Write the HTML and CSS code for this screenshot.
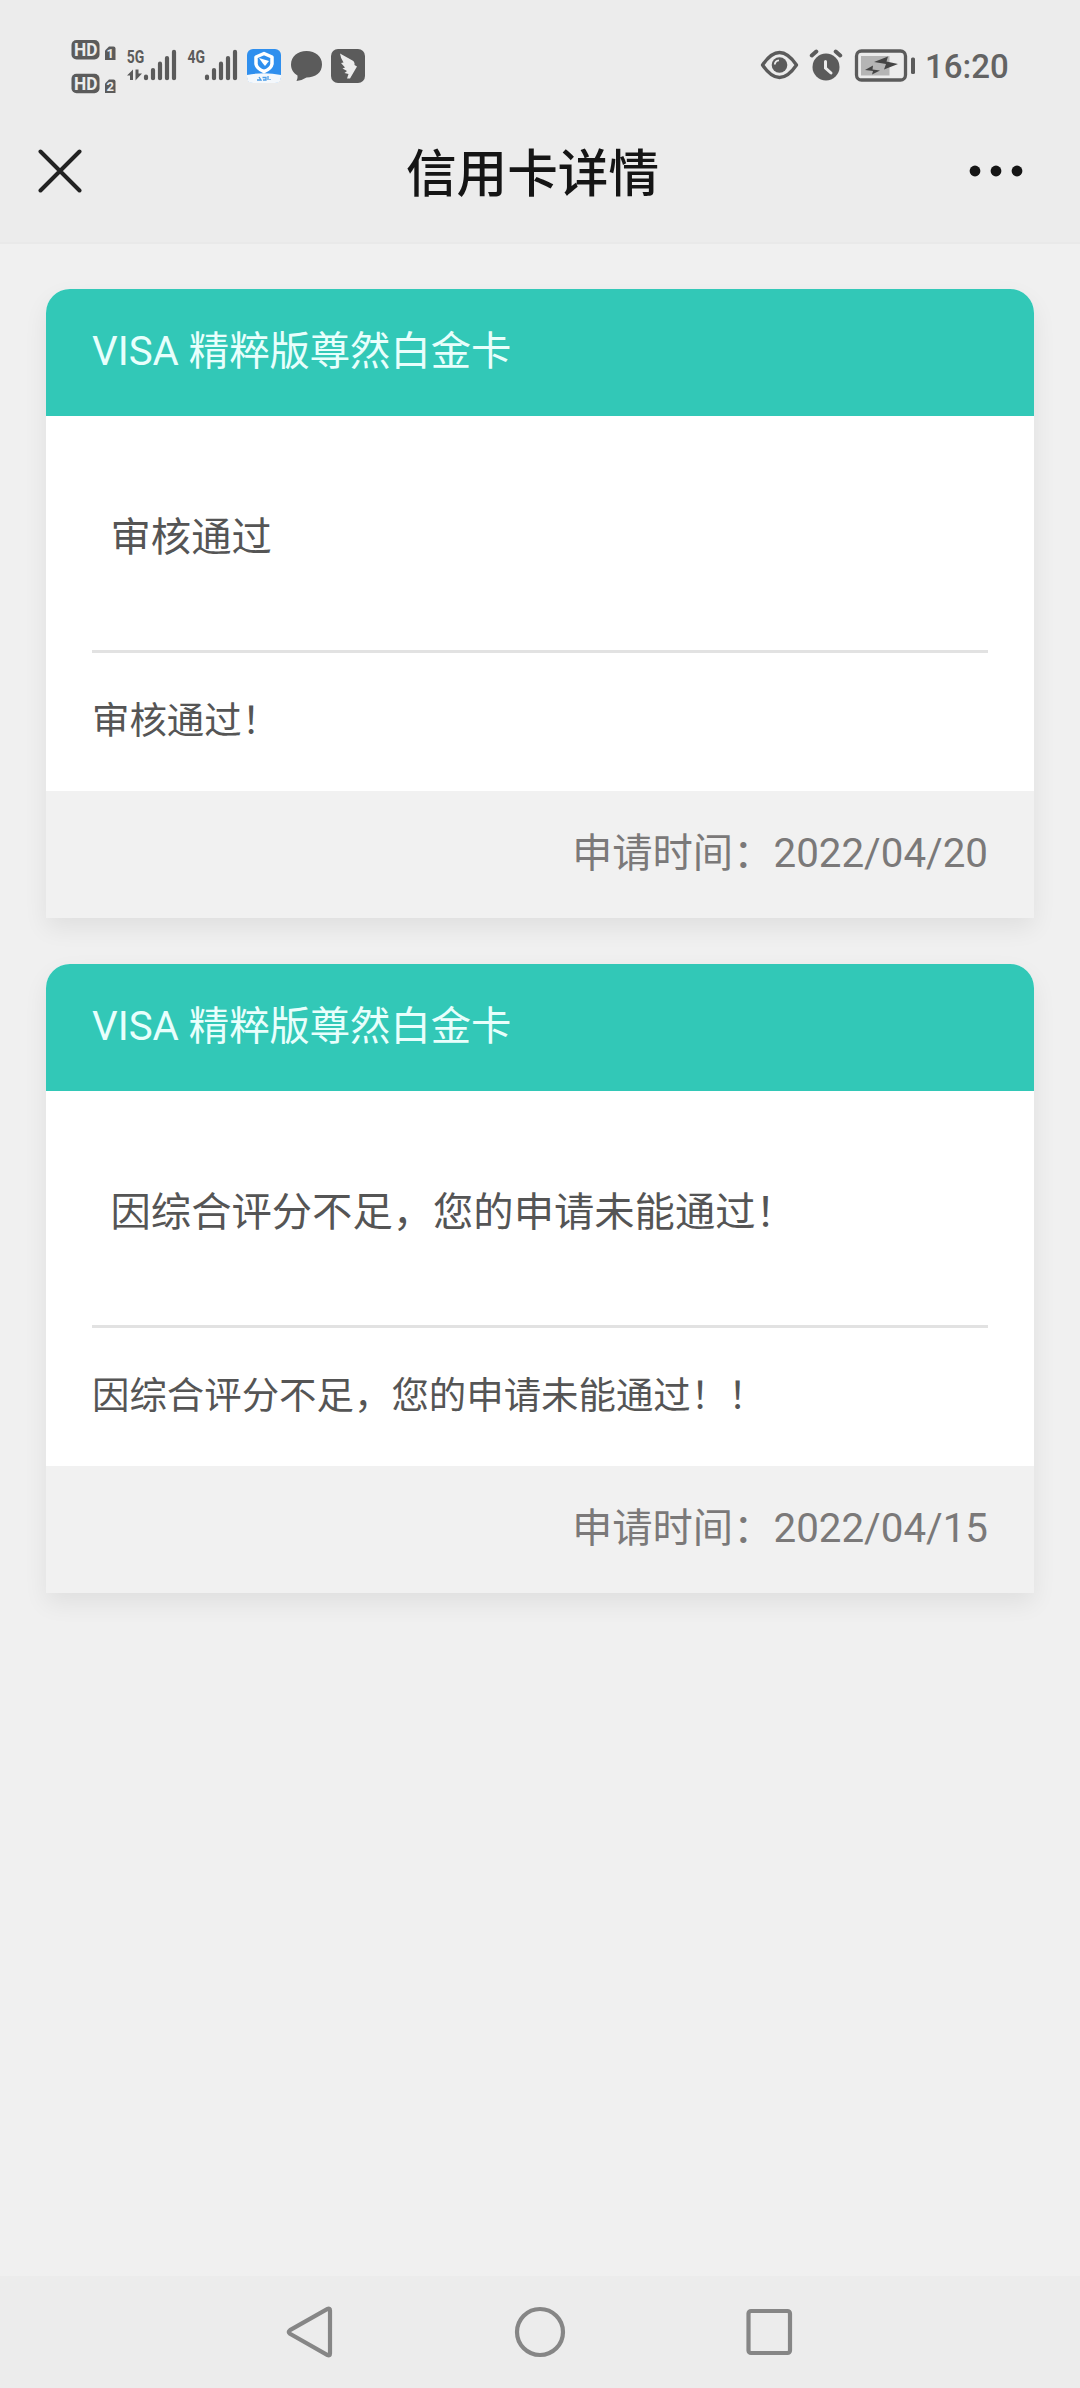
FILE: index.html
```html
<!DOCTYPE html>
<html lang="zh-CN">
<head>
<meta charset="utf-8">
<title>信用卡详情</title>
<link rel="stylesheet" href="styles.css">
</head>
<body>
<div class="screen">
  <header class="top">
    <div class="status">
      <svg class="status-left" width="300" height="60" viewBox="70 38 300 60" fill="#5b5b5b">
        <rect x="71.5" y="40" width="28" height="19.5" rx="5"/>
        <rect x="71.5" y="73.7" width="28" height="19.5" rx="5"/>
        <g class="hd">
          <text x="74" y="56" textLength="23.5" lengthAdjust="spacingAndGlyphs">HD</text>
          <text x="74" y="89.7" textLength="23.5" lengthAdjust="spacingAndGlyphs">HD</text>
        </g>
        <path d="M109 46.500H113.500A2 2 0 0 1 115.500 48.500V60H105V50.500Z"/>
        <path d="M109 79.500H113.500A2 2 0 0 1 115.500 81.500V93H105V83.500Z"/>
        <g class="sim">
          <text x="110.300" y="58.300">1</text>
          <text x="110.300" y="91.300">2</text>
        </g>
        <g class="net">
          <text x="126.800" y="63" textLength="17.500" lengthAdjust="spacingAndGlyphs">5G</text>
          <text x="187.500" y="63" textLength="17.500" lengthAdjust="spacingAndGlyphs">4G</text>
        </g>
        <path d="M127 75.500L133 69.500V80H130V75.500ZM135.500 69.500H138.500V73.500H142L135.500 80.500Z"/>
        <g class="bars">
          <path d="M146 76.500V78.200M153 70V78.200M160 63.700V78.200M167 58V78.200M174 51.800V78.200"/>
          <path d="M207 76.500V78.200M214 70V78.200M221 63.700V78.200M228 58V78.200M235 51.800V78.200"/>
        </g>
        <rect x="247" y="49" width="34" height="34" rx="6" fill="#2f8fee"/>
        <path d="M247 75Q264 71.500 281 75V77Q281 83 275 83H253Q247 83 247 77Z" fill="#f4f8fc"/>
        <path d="M264 53.500L272 57V64Q271 69 264 71.500Q257 69 256 64V57Z" fill="none" stroke="#fff" stroke-width="3.500" stroke-linejoin="round"/>
        <path d="M259 58L269 61L265 66L262.500 63Z" fill="#fff"/>
        <path d="M257 80H261L259 77M262.500 77.500H266V80H263M268 76V80M270 79V80" fill="none" stroke="#4b9de8" stroke-width="1.300"/>
        <path d="M306.500 51C315.500 51 322 56.500 322 64.500S315.500 77.500 306.500 77.500Q302 80.500 296.500 81Q298 78.500 297.500 75.500C293.500 73 291 69.500 291 64.500C291 56.500 297.500 51 306.500 51Z"/>
        <rect x="331" y="49" width="34" height="34" rx="7"/>
        <path d="M340 53.500L352.500 60.500Q355 62 354.500 65L357 66.500L350 78.500H347L348.500 74L344.500 73L347 71L342.500 68.500L345 67.500L341 63L343.500 62.500Q340.500 58 340 53.500Z" fill="#ececec"/>
      </svg>
      <div class="status-right">
        <svg width="156" height="34" viewBox="760 49 156 34" fill="#5b5b5b">
          <path d="M762.500 65Q779.500 40 796.500 65Q779.500 90 762.500 65Z" fill="none" stroke="#5b5b5b" stroke-width="3.300" stroke-linejoin="round"/>
          <circle cx="779.500" cy="65" r="7.800"/>
          <path d="M774.800 64.500Q775 60.800 779 60.300" fill="none" stroke="#ececec" stroke-width="1.800"/>
          <circle cx="826" cy="67" r="13.500"/>
          <path d="M811.800 55.500L816.300 51.500M840.200 55.500L835.700 51.500" stroke="#5b5b5b" stroke-width="4" stroke-linecap="round"/>
          <path d="M825.500 61.500V68L831 73" fill="none" stroke="#ececec" stroke-width="3" stroke-linecap="round"/>
          <rect x="856.500" y="51" width="49" height="29" rx="5" fill="none" stroke="#5b5b5b" stroke-width="3.300"/>
          <rect x="861" y="56" width="28.500" height="19.500" fill="#b5b5b5"/>
          <path d="M874 62L888 56.500L886.500 61.500L898 64L884 69.500L886 64Z" fill="#444"/>
          <path d="M865 70L873 65.500L872.500 69.500L880 70.500L872 74.500L873 71Z" fill="#444"/>
          <rect x="911" y="57.500" width="4" height="16.500" rx="1.500"/>
        </svg>
        <span class="clock">16:20</span>
      </div>
    </div>
    <div class="titlebar">
      <svg class="close" width="44" height="44" viewBox="0 0 44 44"><path d="M2.500 2.500L41.500 41.500M41.500 2.500L2.500 41.500"/></svg>
      <h1 class="title">信用卡详情</h1>
      <svg class="more" width="54" height="12" viewBox="0 0 54 12"><circle cx="6" cy="6" r="5.400"/><circle cx="27" cy="6" r="5.400"/><circle cx="48" cy="6" r="5.400"/></svg>
    </div>
  </header>

  <main class="list">
    <section class="card">
      <h2 class="card-head">VISA 精粹版尊然白金卡</h2>
      <div class="card-body">
        <p class="result">审核通过</p>
        <p class="detail">审核通过！</p>
      </div>
      <div class="card-foot">申请时间：2022/04/20</div>
    </section>
    <section class="card">
      <h2 class="card-head">VISA 精粹版尊然白金卡</h2>
      <div class="card-body">
        <p class="result">因综合评分不足，您的申请未能通过！</p>
        <p class="detail">因综合评分不足，您的申请未能通过！！</p>
      </div>
      <div class="card-foot">申请时间：2022/04/15</div>
    </section>
  </main>

  <nav class="nav">
    <svg width="50" height="52" viewBox="0 0 50 52"><path d="M4 24.200L41.500 3Q44 2 44 4.500V47.500Q44 50 41.500 49L4 27.800Q1.500 26 4 24.200Z"/></svg>
    <svg width="52" height="52" viewBox="0 0 52 52"><circle cx="26" cy="26" r="23"/></svg>
    <svg width="50" height="52" viewBox="0 0 50 52"><rect x="4.500" y="5" width="41.500" height="42" rx="2.500"/></svg>
  </nav>
</div>
</body>
</html>
```
FILE: styles.css
```css
* {
  box-sizing: border-box;
}

body {
  margin: 0;
  background: #f0f0f0;
  font-family: Roboto, "Noto Sans CJK SC", sans-serif;
}

h1, h2, p {
  margin: 0;
  font-weight: 400;
}

svg {
  display: block;
  flex: none;
}

.screen {
  display: flex;
  flex-direction: column;
  width: 1080px;
  height: 2388px;
}

.top {
  height: 244px;
  background: #ececec;
  border-bottom: 2px solid #e9e9e9;
}

.status {
  display: flex;
  justify-content: space-between;
  height: 100px;
  padding: 38px 72px 0 70px;
}

.status-right {
  display: flex;
  width: 248px;
  height: 34px;
  margin-top: 11px;
  align-items: center;
  gap: 9px;
}

.clock {
  font-size: 33px;
  line-height: 34px;
  font-weight: 500;
  padding-top: 1px;
  color: #636363;
}

.hd text {
  font: 700 18px Roboto, sans-serif;
  fill: #ececec;
}

.sim text {
  font: 700 13px Roboto, sans-serif;
  text-anchor: middle;
  fill: #ececec;
}

.net text {
  font: 700 18px Roboto, sans-serif;
}

.bars {
  stroke: #5b5b5b;
  stroke-width: 4.200;
  stroke-linecap: round;
}

.titlebar {
  display: grid;
  grid-template-columns: 1fr auto 1fr;
  align-items: center;
  height: 142px;
  padding: 0 57px 0 38px;
}

.close {
  stroke: #222;
  stroke-width: 4;
  stroke-linecap: round;
}

.title {
  margin: 0 -21px 0 -17px;
  padding-top: 8px;
  font-size: 50.600px;
  line-height: 72px;
  font-weight: 500;
  color: #151515;
}

.more {
  justify-self: end;
  fill: #151515;
}

.list {
  display: flex;
  flex: 1;
  flex-direction: column;
  gap: 46px;
  padding: 45px 46px 0;
}

.card {
  height: 629px;
  border-radius: 24px 24px 0 0;
  background: #fff;
  box-shadow: 0 10px 24px rgba(0, 0, 0, .07);
}

.card-head,
.card-foot {
  height: 127px;
  padding: 0 46px;
  font-size: 40.320px;
  line-height: 126px;
}

.card-head {
  border-radius: 24px 24px 0 0;
  background: #32c8b7;
  color: #e8fffc;
}

.card-body {
  height: 375px;
  padding: 0 46px;
  color: #555;
}

.result {
  height: 237px;
  padding-left: 18.500px;
  border-bottom: 3px solid #e2e2e2;
  font-size: 40.320px;
  line-height: 244px;
}

.detail {
  font-size: 37.440px;
  line-height: 136px;
}

.card-foot {
  background: #f1f1f1;
  color: #7b7979;
  text-align: right;
}

.nav {
  display: flex;
  justify-content: center;
  align-items: center;
  gap: 178px;
  height: 112px;
  background: #ececec;
}

.nav svg {
  fill: none;
  stroke: #868686;
  stroke-width: 4.200;
}
```
